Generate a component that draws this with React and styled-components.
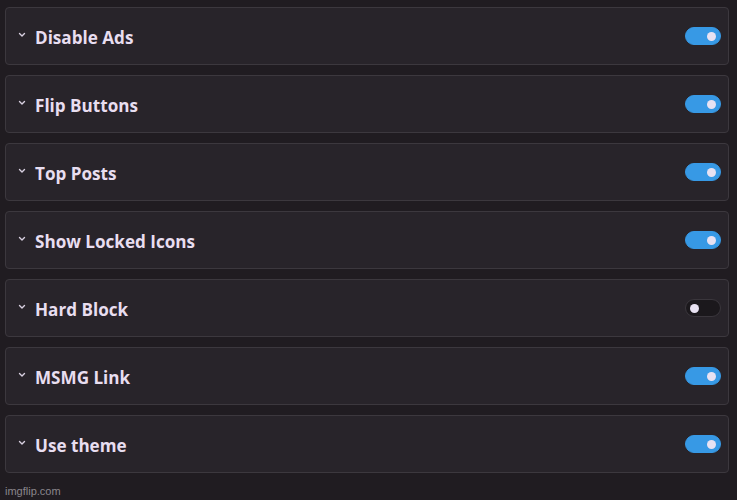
import React from 'react';
import styled, { createGlobalStyle } from 'styled-components';

const Global = createGlobalStyle`
  html, body { margin: 0; padding: 0; background: #201c21; }
  body { font-family: "Open Sans", "Noto Sans", sans-serif; }
`;

const Page = styled.div`
  width: 737px;
  height: 500px;
  box-sizing: border-box;
  padding: 7px 8px 0 5px;
  display: flex;
  flex-direction: column;
  gap: 10px;
  position: relative;
  background: #201c21;
`;

const Card = styled.div`
  height: 58px;
  box-sizing: border-box;
  border: 1px solid #3c383e;
  border-radius: 4px;
  background: #28242a;
  display: flex;
  align-items: center;
  padding: 0 7px 0 12px;
`;

const Chevron = styled.svg`
  width: 8px;
  height: 8px;
  margin-right: 9px;
  margin-top: -3px;
  flex: none;
`;

const Title = styled.span`
  flex: 1;
  color: #e8def0;
  font-size: 17.1px;
  font-weight: 700;
  padding-top: 2px;
`;

const Switch = styled.span`
  width: 36px;
  height: 18px;
  box-sizing: border-box;
  border-radius: 9px;
  background: ${p => (p.on ? '#3799e5' : '#1b181c')};
  border: 1px solid ${p => (p.on ? '#3799e5' : '#3a363c')};
  display: flex;
  align-items: center;
  justify-content: ${p => (p.on ? 'flex-end' : 'flex-start')};
  padding: 0 4px;
`;

const Knob = styled.span`
  width: 9px;
  height: 9px;
  border-radius: 50%;
  background: #e8e2f2;
`;

const Watermark = styled.span`
  position: absolute;
  left: 5px;
  bottom: 3px;
  font-family: "Liberation Sans", Arial, sans-serif;
  font-size: 11px;
  color: #8a868c;
`;

const items = [
  ['Disable Ads', true],
  ['Flip Buttons', true],
  ['Top Posts', true],
  ['Show Locked Icons', true],
  ['Hard Block', false],
  ['MSMG Link', true],
  ['Use theme', true],
];

export default function App() {
  return (
    <>
      <Global />
      <Page>
        {items.map(([label, on]) => (
          <Card key={label}>
            <Chevron viewBox="0 0 8 8">
              <path d="M1.5 2.5 L4 5 L6.5 2.5" fill="none" stroke="#d8d0e0" strokeWidth="1.4" strokeLinecap="round" strokeLinejoin="round" />
            </Chevron>
            <Title>{label}</Title>
            <Switch on={on ? 1 : 0}>
              <Knob />
            </Switch>
          </Card>
        ))}
        <Watermark>imgflip.com</Watermark>
      </Page>
    </>
  );
}
